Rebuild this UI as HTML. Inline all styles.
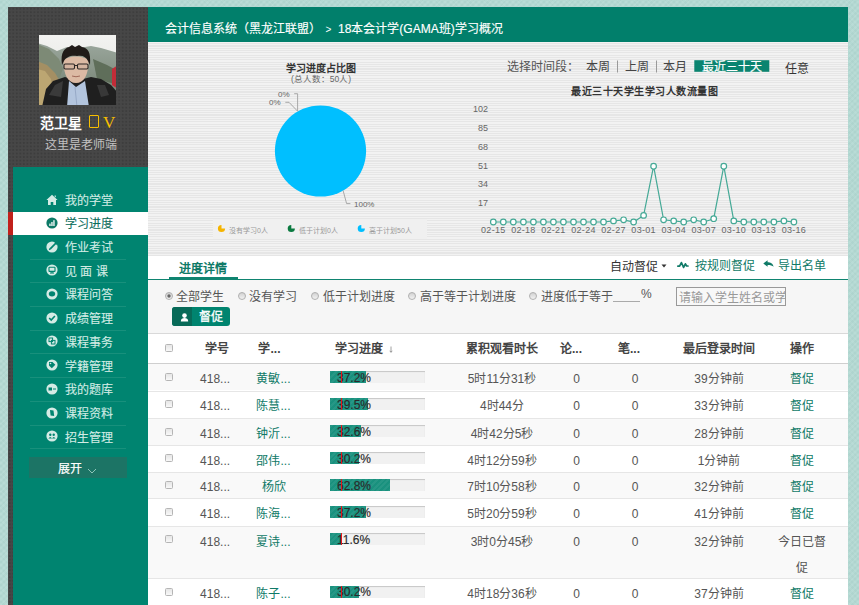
<!DOCTYPE html>
<html lang="zh-CN"><head><meta charset="utf-8">
<style>
*{margin:0;padding:0;box-sizing:border-box}
html,body{width:859px;height:605px;overflow:hidden}
body{position:relative;font-family:"Liberation Sans",sans-serif;font-size:12px;color:#333;
background-color:#b4d9d3;
background-image:repeating-linear-gradient(45deg,rgba(255,255,255,.07) 0 2px,rgba(0,0,0,0) 2px 4px),repeating-linear-gradient(-45deg,rgba(0,60,50,.03) 0 2px,rgba(0,0,0,0) 2px 4px);}
.a{position:absolute;white-space:nowrap}
#side{position:absolute;left:8px;top:7px;width:140px;height:600px;background-color:#474747;
background-image:radial-gradient(circle at 1.6px 1.6px,#3d3d3d 0.7px,rgba(0,0,0,0) 1.3px);background-size:3.54px 3.54px}
#menu{position:absolute;left:13px;top:167px;width:135px;height:440px;background:#008470}
#main{position:absolute;left:148px;top:7px;width:700px;height:600px;background:#fff;overflow:hidden}
#hdr{position:absolute;left:0;top:0;width:700px;height:35px;background:#017f6b}
#ov{position:absolute;left:0;top:0;width:859px;height:605px}
#charts{position:absolute;left:0;top:35px;width:700px;height:214px;background-color:#ececec;
background-image:repeating-linear-gradient(180deg,#f2f2f2 0 1.2px,#e6e6e6 1.2px 2.3px)}
</style></head><body>
<div id="side">
  <svg class="a" style="left:31px;top:28px" width="77" height="70" viewBox="0 0 77 70">
    <defs>
      <linearGradient id="sky" x1="0" y1="0" x2="0" y2="1"><stop offset="0" stop-color="#f3f3f1"/><stop offset="1" stop-color="#dfe2de"/></linearGradient>
      <linearGradient id="mt" x1="0" y1="0" x2="0" y2="1"><stop offset="0" stop-color="#9aa69c"/><stop offset="1" stop-color="#6d7b6a"/></linearGradient>
      <filter id="bl" x="0" y="0" width="1" height="1"><feGaussianBlur stdDeviation="0.7"/></filter>
      <clipPath id="avc"><rect width="77" height="70"/></clipPath>
    </defs>
    <g clip-path="url(#avc)"><g style="filter:blur(0.5px)">
    <rect x="-2" y="-2" width="81" height="74" fill="url(#sky)"/>
    <path d="M-2 8 L8 11 L18 16 L28 12 L40 13 L52 11 L62 13 L79 18 L79 72 L-2 72Z" fill="url(#mt)"/>
    <path d="M-2 9 L10 14 L20 24 L24 34 L20 44 L-2 44Z" fill="#7d8a76"/>
    <path d="M54 24 L68 30 L79 36 L79 50 L58 44Z" fill="#5f6e5a"/>
    <path d="M-2 26 L8 30 L16 38 L22 48 L20 72 L-2 72Z" fill="#a48f63"/>
    <path d="M-2 34 L6 36 L12 44 L14 56 L8 72 L-2 72Z" fill="#bca672"/>
    <path d="M73 34 L79 30 L79 54 L73 50Z" fill="#c22c38"/>
    <path d="M3 72 L7 54 L14 46 L26 42 L32 44 L44 44 L52 42 L62 44 L72 50 L79 58 L79 72Z" fill="#1f1f1f"/>
    <path d="M10 60 L16 50 L24 46 L22 62Z" fill="#3a3a3a"/>
    <path d="M58 50 L66 50 L70 60 L62 62Z" fill="#383838"/>
    <path d="M30 46 L37 52 L46 46 L50 72 L28 72Z" fill="#b3c5de"/>
    <path d="M36 52 L38 72" stroke="#8fa2c0" stroke-width="0.8"/>
    <path d="M24.5 26 C24.5 40 29 48 37 48 C45 48 49.5 40 49.5 26 C47 20 27 20 24.5 26Z" fill="#dcbaa4"/>
    <path d="M23 30 C21 17 26 13 30 12 L33 10 L36 12 L40 10 L43 12 C49 13 52 17 51 30 L49 26 C47 22 44 20 38 21 C32 20 27 22 25 26Z" fill="#201b18"/>
    <rect x="25" y="29" width="10.5" height="5" rx="1.2" fill="#d4b4a0" stroke="#2c2624" stroke-width="1.1"/>
    <rect x="38.5" y="29" width="10.5" height="5" rx="1.2" fill="#d4b4a0" stroke="#2c2624" stroke-width="1.1"/>
    <path d="M35.5 30.5 L38.5 30.5" stroke="#302a28" stroke-width="1"/>
    <path d="M33 41 Q37 42.5 41 41" stroke="#a06a5a" stroke-width="1" fill="none"/>
    </g></g>
  </svg>
  <div class="a" id="uname" style="left:32px;top:108px;font-size:14px;line-height:16px;font-weight:bold;color:#fff">范卫星</div>
  <div class="a" style="left:81px;top:108px;width:9.5px;height:13px;border:1.6px solid #f7be00;border-radius:1px"></div>
  <div class="a" style="left:95px;top:105.80px;font-family:'Liberation Serif',serif;font-size:17px;line-height:20px;color:#f7be00">V</div>
  <div class="a" style="left:37px;top:129.80px;font-size:12px;line-height:16px;color:#c2c2c2">这里是老师端</div>
</div>
<div id="menu">
<svg class="a" style="left:33.3px;top:27.10px" width="12" height="12" viewBox="0 0 12 12"><path d="M6 0.8 L11.6 6 L10 6 L10 11 L7.3 11 L7.3 8 L4.7 8 L4.7 11 L2 11 L2 6 L0.4 6Z M8.6 1.5 L9.8 1.5 L9.8 3.6 L8.6 2.6Z" fill="#d4ebe5"/></svg>
<div class="a" style="left:52px;top:25.60px;line-height:16px;font-size:12px;color:#d3ece5;-webkit-text-stroke:0.1px">我的学堂</div>
<div class="a" style="left:0;top:45.02px;width:135px;height:23px;background:#fff"></div>
<div class="a" style="left:-5px;top:45.02px;width:5px;height:23px;background:#c1201b"></div>
<svg class="a" style="left:33.3px;top:49.82px" width="12" height="12" viewBox="0 0 12 12"><circle cx="6" cy="6" r="5.6" fill="#0d7a67"/><rect x="3.3" y="6.6" width="1.3" height="2.4" fill="#fff"/><rect x="5.3" y="5" width="1.3" height="4" fill="#fff"/><rect x="7.3" y="3.2" width="1.3" height="5.8" fill="#fff"/></svg>
<div class="a" style="left:52px;top:49.32px;line-height:16px;font-size:12px;color:#0b6c5b;-webkit-text-stroke:0.1px">学习进度</div>
<svg class="a" style="left:33.3px;top:73.54px" width="12" height="12" viewBox="0 0 12 12"><circle cx="6" cy="6" r="5.6" fill="#d4ebe5"/><path d="M4.2 7.8 L11.5 0.5" stroke="#008470" stroke-width="1.7"/><path d="M2.8 9.2 L3.4 7.1 L4.9 8.6Z" fill="#008470"/><path d="M8.4 1.2 L11.6 0.4 L11.2 4.4Z" fill="#008470"/></svg>
<div class="a" style="left:52px;top:73.04px;line-height:16px;font-size:12px;color:#d3ece5;-webkit-text-stroke:0.1px">作业考试</div>
<div class="a" style="left:17px;top:91.60px;width:96px;height:1px;background:#18907c"></div>
<svg class="a" style="left:33.3px;top:97.26px" width="12" height="12" viewBox="0 0 12 12"><circle cx="6" cy="6" r="5.6" fill="#d4ebe5"/><rect x="3" y="3.2" width="6" height="4.2" rx=".5" fill="none" stroke="#008470" stroke-width="1.1"/><path d="M4 9 L8 9" stroke="#008470" stroke-width="1.1"/><path d="M6 7.4 L6 9" stroke="#008470" stroke-width="1"/></svg>
<div class="a" style="left:52px;top:96.76px;line-height:16px;font-size:12px;color:#d3ece5;-webkit-text-stroke:0.1px">见 面 课</div>
<div class="a" style="left:17px;top:115.32px;width:96px;height:1px;background:#18907c"></div>
<svg class="a" style="left:33.3px;top:120.98px" width="12" height="12" viewBox="0 0 12 12"><circle cx="6" cy="6" r="5.6" fill="#d4ebe5"/><ellipse cx="6" cy="5.8" rx="3.2" ry="2.6" fill="#008470"/></svg>
<div class="a" style="left:52px;top:120.48px;line-height:16px;font-size:12px;color:#d3ece5;-webkit-text-stroke:0.1px">课程问答</div>
<div class="a" style="left:17px;top:139.04px;width:96px;height:1px;background:#18907c"></div>
<svg class="a" style="left:33.3px;top:144.70px" width="12" height="12" viewBox="0 0 12 12"><circle cx="6" cy="6" r="5.6" fill="#d4ebe5"/><path d="M3.2 6 L5.2 8 L8.9 4" stroke="#008470" stroke-width="1.6" fill="none"/></svg>
<div class="a" style="left:52px;top:144.20px;line-height:16px;font-size:12px;color:#d3ece5;-webkit-text-stroke:0.1px">成绩管理</div>
<div class="a" style="left:17px;top:162.76px;width:96px;height:1px;background:#18907c"></div>
<svg class="a" style="left:33.3px;top:168.42px" width="12" height="12" viewBox="0 0 12 12"><circle cx="6" cy="6" r="5.6" fill="#d4ebe5"/><rect x="3" y="3" width="3.6" height="3.6" fill="none" stroke="#008470" stroke-width="1"/><rect x="5.4" y="5.4" width="3.6" height="3.6" fill="none" stroke="#008470" stroke-width="1"/></svg>
<div class="a" style="left:52px;top:167.92px;line-height:16px;font-size:12px;color:#d3ece5;-webkit-text-stroke:0.1px">课程事务</div>
<div class="a" style="left:17px;top:186.48px;width:96px;height:1px;background:#18907c"></div>
<svg class="a" style="left:33.3px;top:192.14px" width="12" height="12" viewBox="0 0 12 12"><circle cx="6" cy="6" r="5.6" fill="#d4ebe5"/><path d="M3 3 L6.5 3 L9.3 5.8 L5.8 9.3 L3 6.5Z" fill="#008470"/><circle cx="4.5" cy="4.5" r=".8" fill="#d4ebe5"/></svg>
<div class="a" style="left:52px;top:191.64px;line-height:16px;font-size:12px;color:#d3ece5;-webkit-text-stroke:0.1px">学籍管理</div>
<div class="a" style="left:17px;top:210.20px;width:96px;height:1px;background:#18907c"></div>
<svg class="a" style="left:33.3px;top:215.86px" width="12" height="12" viewBox="0 0 12 12"><circle cx="6" cy="6" r="5.6" fill="#d4ebe5"/><rect x="2.5" y="4.5" width="3.5" height="3" fill="#008470"/><path d="M7 6 L10 6" stroke="#008470" stroke-width="1"/></svg>
<div class="a" style="left:52px;top:215.36px;line-height:16px;font-size:12px;color:#d3ece5;-webkit-text-stroke:0.1px">我的题库</div>
<div class="a" style="left:17px;top:233.92px;width:96px;height:1px;background:#18907c"></div>
<svg class="a" style="left:33.3px;top:239.58px" width="12" height="12" viewBox="0 0 12 12"><circle cx="6" cy="6" r="5.6" fill="#d4ebe5"/><path d="M4 3 L7.5 3.5 L8.2 9 L4.6 8.5Z" fill="#008470"/></svg>
<div class="a" style="left:52px;top:239.08px;line-height:16px;font-size:12px;color:#d3ece5;-webkit-text-stroke:0.1px">课程资料</div>
<div class="a" style="left:17px;top:257.64px;width:96px;height:1px;background:#18907c"></div>
<svg class="a" style="left:33.3px;top:263.30px" width="12" height="12" viewBox="0 0 12 12"><circle cx="6" cy="6" r="5.6" fill="#d4ebe5"/><circle cx="4.3" cy="4.8" r="1.2" fill="#008470"/><circle cx="7.7" cy="4.8" r="1.2" fill="#008470"/><path d="M2.4 8.6 Q4.3 5.6 6 8.6 Q7.7 5.6 9.6 8.6Z" fill="#008470"/></svg>
<div class="a" style="left:52px;top:262.80px;line-height:16px;font-size:12px;color:#d3ece5;-webkit-text-stroke:0.1px">招生管理</div>
<div class="a" style="left:17px;top:281.36px;width:96px;height:1px;background:#18907c"></div>
<div class="a" style="left:16px;top:290px;width:98px;height:21px;background:#1c7465"></div>
<div class="a" style="left:45px;top:293.80px;line-height:16px;font-size:12px;color:#fff;-webkit-text-stroke:0.2px #fff">展开</div>
<svg class="a" style="left:74px;top:300.7px" width="10" height="6" viewBox="0 0 10 6"><path d="M1 1 L5 5 L9 1" stroke="#8fc4b8" stroke-width="1" fill="none"/></svg>
</div>
<div id="main">
  <div id="hdr">
  <div class="a" style="left:17px;top:13.80px;font-size:12px;line-height:16px;color:#fff;-webkit-text-stroke:0.15px #fff">会计信息系统（黑龙江联盟）</div>
  <div class="a" style="left:177.5px;top:15.80px;font-size:10px;line-height:14px;color:#fff">&gt;</div>
  <div class="a" style="left:190px;top:13.80px;font-size:12px;line-height:16px;color:#fff;-webkit-text-stroke:0.15px #fff">18本会计学(GAMA班)学习概况</div>
</div>
  <div id="charts"></div>
</div>
<div id="ov">
<svg class="a" style="left:0;top:0" width="859" height="605" viewBox="0 0 859 605">
  <rect x="213" y="219" width="214" height="20" fill="#f0f0f0"/>
  <circle cx="320.5" cy="151" r="45.6" fill="#00bfff"/>
  <path d="M294.2 93.7 L297.6 93.7 L297.6 111.2 M285.3 102.3 L289 102.3 L297.6 111.2 M343.1 190.5 L346.6 203.6 L350.4 203.6" stroke="#a0a0a0" stroke-width="0.9" fill="none"/>
  <path d="M221.5 224.9 A3.6 3.6 0 1 0 225.1 228.5 L221.5 228.5Z" fill="#f5b400"/>
  <path d="M291.3 224.9 A3.6 3.6 0 1 0 294.9 228.5 L291.3 228.5Z" fill="#0b7a40"/>
  <path d="M361.3 224.9 A3.6 3.6 0 1 0 364.9 228.5 L361.3 228.5Z" fill="#00bfff"/>
  <polyline points="493.3,222.0 503.3,222.0 513.3,222.0 523.4,222.0 533.4,222.0 543.4,222.0 553.4,222.0 563.4,222.0 573.5,222.0 583.5,222.0 593.5,222.0 603.5,222.0 613.5,220.9 623.6,219.8 633.6,222.0 643.6,215.4 653.6,166.2 663.6,219.8 673.7,220.9 683.7,222.0 693.7,219.8 703.7,222.0 713.7,218.7 723.8,166.2 733.8,220.9 743.8,222.0 753.8,222.0 763.8,222.0 773.9,222.0 783.9,220.9 793.9,222.0" fill="none" stroke="#45a996" stroke-width="1.2"/>
  <circle cx="493.3" cy="222.0" r="2.8" fill="#fff" stroke="#45a996" stroke-width="1.2"/><circle cx="503.3" cy="222.0" r="2.8" fill="#fff" stroke="#45a996" stroke-width="1.2"/><circle cx="513.3" cy="222.0" r="2.8" fill="#fff" stroke="#45a996" stroke-width="1.2"/><circle cx="523.4" cy="222.0" r="2.8" fill="#fff" stroke="#45a996" stroke-width="1.2"/><circle cx="533.4" cy="222.0" r="2.8" fill="#fff" stroke="#45a996" stroke-width="1.2"/><circle cx="543.4" cy="222.0" r="2.8" fill="#fff" stroke="#45a996" stroke-width="1.2"/><circle cx="553.4" cy="222.0" r="2.8" fill="#fff" stroke="#45a996" stroke-width="1.2"/><circle cx="563.4" cy="222.0" r="2.8" fill="#fff" stroke="#45a996" stroke-width="1.2"/><circle cx="573.5" cy="222.0" r="2.8" fill="#fff" stroke="#45a996" stroke-width="1.2"/><circle cx="583.5" cy="222.0" r="2.8" fill="#fff" stroke="#45a996" stroke-width="1.2"/><circle cx="593.5" cy="222.0" r="2.8" fill="#fff" stroke="#45a996" stroke-width="1.2"/><circle cx="603.5" cy="222.0" r="2.8" fill="#fff" stroke="#45a996" stroke-width="1.2"/><circle cx="613.5" cy="220.9" r="2.8" fill="#fff" stroke="#45a996" stroke-width="1.2"/><circle cx="623.6" cy="219.8" r="2.8" fill="#fff" stroke="#45a996" stroke-width="1.2"/><circle cx="633.6" cy="222.0" r="2.8" fill="#fff" stroke="#45a996" stroke-width="1.2"/><circle cx="643.6" cy="215.4" r="2.8" fill="#fff" stroke="#45a996" stroke-width="1.2"/><circle cx="653.6" cy="166.2" r="2.8" fill="#fff" stroke="#45a996" stroke-width="1.2"/><circle cx="663.6" cy="219.8" r="2.8" fill="#fff" stroke="#45a996" stroke-width="1.2"/><circle cx="673.7" cy="220.9" r="2.8" fill="#fff" stroke="#45a996" stroke-width="1.2"/><circle cx="683.7" cy="222.0" r="2.8" fill="#fff" stroke="#45a996" stroke-width="1.2"/><circle cx="693.7" cy="219.8" r="2.8" fill="#fff" stroke="#45a996" stroke-width="1.2"/><circle cx="703.7" cy="222.0" r="2.8" fill="#fff" stroke="#45a996" stroke-width="1.2"/><circle cx="713.7" cy="218.7" r="2.8" fill="#fff" stroke="#45a996" stroke-width="1.2"/><circle cx="723.8" cy="166.2" r="2.8" fill="#fff" stroke="#45a996" stroke-width="1.2"/><circle cx="733.8" cy="220.9" r="2.8" fill="#fff" stroke="#45a996" stroke-width="1.2"/><circle cx="743.8" cy="222.0" r="2.8" fill="#fff" stroke="#45a996" stroke-width="1.2"/><circle cx="753.8" cy="222.0" r="2.8" fill="#fff" stroke="#45a996" stroke-width="1.2"/><circle cx="763.8" cy="222.0" r="2.8" fill="#fff" stroke="#45a996" stroke-width="1.2"/><circle cx="773.9" cy="222.0" r="2.8" fill="#fff" stroke="#45a996" stroke-width="1.2"/><circle cx="783.9" cy="220.9" r="2.8" fill="#fff" stroke="#45a996" stroke-width="1.2"/><circle cx="793.9" cy="222.0" r="2.8" fill="#fff" stroke="#45a996" stroke-width="1.2"/>
  <rect x="694.3" y="60.2" width="75" height="11.6" fill="#0b8470"/>
  <rect x="617" y="60.5" width="1" height="12" fill="#999"/>
  <rect x="656" y="60.5" width="1" height="12" fill="#999"/>
</svg>
<div class="a" style="left:286px;top:61.80px;font-size:10px;line-height:14px;color:#333;font-weight:bold">学习进度占比图</div>
<div class="a" style="left:291px;top:72.80px;font-size:8.5px;line-height:12px;color:#666;">(总人数：50人)</div>
<div class="a" style="left:278px;top:88.80px;font-size:8px;line-height:12px;color:#666;">0%</div>
<div class="a" style="left:269px;top:96.80px;font-size:8px;line-height:12px;color:#666;">0%</div>
<div class="a" style="left:354px;top:198.80px;font-size:8px;line-height:12px;color:#666;">100%</div>
<div class="a" style="left:229px;top:224.80px;font-size:7px;line-height:11px;color:#999;">没有学习0人</div>
<div class="a" style="left:299px;top:224.80px;font-size:7px;line-height:11px;color:#999;">低于计划0人</div>
<div class="a" style="left:369px;top:224.80px;font-size:7px;line-height:11px;color:#999;">高于计划50人</div>
<div class="a" style="left:507px;top:58.80px;font-size:12px;line-height:16px;color:#555;">选择时间段：</div>
<div class="a" style="left:586px;top:58.80px;font-size:12px;line-height:16px;color:#444;">本周</div>
<div class="a" style="left:625px;top:58.80px;font-size:12px;line-height:16px;color:#444;">上周</div>
<div class="a" style="left:663px;top:58.80px;font-size:12px;line-height:16px;color:#444;">本月</div>
<div class="a" style="left:702px;top:58.80px;font-size:12px;line-height:16px;color:#fff;-webkit-text-stroke:0.2px #fff">最近三十天</div>
<div class="a" style="left:785px;top:60.80px;font-size:12px;line-height:16px;color:#333;">任意</div>
<div class="a" style="left:571px;top:84.80px;font-size:10px;line-height:14px;letter-spacing:0.5px;color:#333;font-weight:bold">最近三十天学生学习人数流量图</div>
<div class="a" style="left:440px;width:48px;text-align:right;top:103.20px;font-size:9px;line-height:13px;color:#666">102</div>
<div class="a" style="left:440px;width:48px;text-align:right;top:122.10px;font-size:9px;line-height:13px;color:#666">85</div>
<div class="a" style="left:440px;width:48px;text-align:right;top:140.80px;font-size:9px;line-height:13px;color:#666">68</div>
<div class="a" style="left:440px;width:48px;text-align:right;top:160.20px;font-size:9px;line-height:13px;color:#666">51</div>
<div class="a" style="left:440px;width:48px;text-align:right;top:178.40px;font-size:9px;line-height:13px;color:#666">34</div>
<div class="a" style="left:440px;width:48px;text-align:right;top:197.10px;font-size:9px;line-height:13px;color:#666">17</div>
<div class="a" style="left:473.3px;width:40px;text-align:center;top:223.50px;font-size:9px;line-height:13px;color:#666;letter-spacing:0.3px">02-15</div>
<div class="a" style="left:503.4px;width:40px;text-align:center;top:223.50px;font-size:9px;line-height:13px;color:#666;letter-spacing:0.3px">02-18</div>
<div class="a" style="left:533.4px;width:40px;text-align:center;top:223.50px;font-size:9px;line-height:13px;color:#666;letter-spacing:0.3px">02-21</div>
<div class="a" style="left:563.5px;width:40px;text-align:center;top:223.50px;font-size:9px;line-height:13px;color:#666;letter-spacing:0.3px">02-24</div>
<div class="a" style="left:593.5px;width:40px;text-align:center;top:223.50px;font-size:9px;line-height:13px;color:#666;letter-spacing:0.3px">02-27</div>
<div class="a" style="left:623.6px;width:40px;text-align:center;top:223.50px;font-size:9px;line-height:13px;color:#666;letter-spacing:0.3px">03-01</div>
<div class="a" style="left:653.7px;width:40px;text-align:center;top:223.50px;font-size:9px;line-height:13px;color:#666;letter-spacing:0.3px">03-04</div>
<div class="a" style="left:683.7px;width:40px;text-align:center;top:223.50px;font-size:9px;line-height:13px;color:#666;letter-spacing:0.3px">03-07</div>
<div class="a" style="left:713.8px;width:40px;text-align:center;top:223.50px;font-size:9px;line-height:13px;color:#666;letter-spacing:0.3px">03-10</div>
<div class="a" style="left:743.8px;width:40px;text-align:center;top:223.50px;font-size:9px;line-height:13px;color:#666;letter-spacing:0.3px">03-13</div>
<div class="a" style="left:773.9px;width:40px;text-align:center;top:223.50px;font-size:9px;line-height:13px;color:#666;letter-spacing:0.3px">03-16</div>
<div class="a" style="left:148px;top:279px;width:700px;height:1px;background:#0f8470"></div>
<div class="a" style="left:169px;top:277px;width:69px;height:2px;background:#0f8470"></div>
<div class="a" style="left:179px;top:260.80px;font-size:12px;line-height:16px;color:#0f7a67;font-weight:bold">进度详情</div>
<div class="a" style="left:610px;top:258.80px;font-size:12px;line-height:16px;color:#333;">自动督促</div>
<svg class="a" style="left:661px;top:264px" width="6" height="4" viewBox="0 0 6 4"><path d="M0.5 0.5 L5.5 0.5 L3 3.5Z" fill="#333"/></svg>
<svg class="a" style="left:677px;top:261px" width="12" height="8" viewBox="0 0 12 8"><path d="M0.8 5.2 L2.6 5.2 L4.4 1.6 L6.6 6.4 L8.4 2.8 L9.6 5 L11 5" stroke="#0f7a67" stroke-width="1.7" fill="none" stroke-linejoin="round" stroke-linecap="round"/></svg>
<div class="a" style="left:695px;top:257.80px;font-size:12px;line-height:16px;color:#0f7a67;">按规则督促</div>
<svg class="a" style="left:762.5px;top:260px" width="11" height="8" viewBox="0 0 11 8"><path d="M0.3 3.5 L4.6 0.3 L4.6 2.2 C7.5 2.2 9.8 3 10.6 6.8 C9.2 5.4 7.5 4.9 4.6 4.9 L4.6 6.8Z" fill="#0f7a67"/></svg>
<div class="a" style="left:778px;top:257.80px;font-size:12px;line-height:16px;color:#0f7a67;">导出名单</div>
<div class="a" style="left:148px;top:280px;width:700px;height:54px;background:#f6f6f6;border-bottom:1px solid #d9d9d9"></div>
<svg class="a" style="left:165.0px;top:292px" width="8" height="8" viewBox="0 0 8 8"><defs><linearGradient id="rg" x1="0" y1="0" x2="0" y2="1"><stop offset="0" stop-color="#d0d0d0"/><stop offset="1" stop-color="#f4f4f4"/></linearGradient></defs><circle cx="4" cy="4" r="3.5" fill="url(#rg)" stroke="#aaa" stroke-width="0.9"/><circle cx="4" cy="4" r="1.7" fill="#666"/></svg>
<div class="a" style="left:176px;top:288.80px;font-size:12px;line-height:16px;color:#555;">全部学生</div>
<svg class="a" style="left:237.5px;top:292px" width="8" height="8" viewBox="0 0 8 8"><defs><linearGradient id="rg" x1="0" y1="0" x2="0" y2="1"><stop offset="0" stop-color="#d0d0d0"/><stop offset="1" stop-color="#f4f4f4"/></linearGradient></defs><circle cx="4" cy="4" r="3.5" fill="url(#rg)" stroke="#aaa" stroke-width="0.9"/></svg>
<div class="a" style="left:249px;top:288.80px;font-size:12px;line-height:16px;color:#555;">没有学习</div>
<svg class="a" style="left:311.0px;top:292px" width="8" height="8" viewBox="0 0 8 8"><defs><linearGradient id="rg" x1="0" y1="0" x2="0" y2="1"><stop offset="0" stop-color="#d0d0d0"/><stop offset="1" stop-color="#f4f4f4"/></linearGradient></defs><circle cx="4" cy="4" r="3.5" fill="url(#rg)" stroke="#aaa" stroke-width="0.9"/></svg>
<div class="a" style="left:322.5px;top:288.80px;font-size:12px;line-height:16px;color:#555;">低于计划进度</div>
<svg class="a" style="left:408.0px;top:292px" width="8" height="8" viewBox="0 0 8 8"><defs><linearGradient id="rg" x1="0" y1="0" x2="0" y2="1"><stop offset="0" stop-color="#d0d0d0"/><stop offset="1" stop-color="#f4f4f4"/></linearGradient></defs><circle cx="4" cy="4" r="3.5" fill="url(#rg)" stroke="#aaa" stroke-width="0.9"/></svg>
<div class="a" style="left:419.5px;top:288.80px;font-size:12px;line-height:16px;color:#555;">高于等于计划进度</div>
<svg class="a" style="left:529.0px;top:292px" width="8" height="8" viewBox="0 0 8 8"><defs><linearGradient id="rg" x1="0" y1="0" x2="0" y2="1"><stop offset="0" stop-color="#d0d0d0"/><stop offset="1" stop-color="#f4f4f4"/></linearGradient></defs><circle cx="4" cy="4" r="3.5" fill="url(#rg)" stroke="#aaa" stroke-width="0.9"/></svg>
<div class="a" style="left:540.5px;top:288.80px;font-size:12px;line-height:16px;color:#555;">进度低于等于</div>
<div class="a" style="left:613px;top:301px;width:27px;height:1px;background:#aaa"></div>
<div class="a" style="left:641px;top:285.80px;font-size:12px;line-height:16px;color:#555;">%</div>
<div class="a" style="left:675.5px;top:287px;width:110px;height:19px;border:1px solid #999;background:#f8f8f8;overflow:hidden"><div style="position:absolute;left:2px;top:1.5px;font-size:12px;line-height:16px;color:#999;white-space:nowrap">请输入学生姓名或学号</div></div>
<div class="a" style="left:172px;top:307px;width:58px;height:19px;border-radius:3px;background:#00846f;overflow:hidden"><div style="position:absolute;left:0;top:0;width:20px;height:19px;background:#086a58"></div></div>
<svg class="a" style="left:179.5px;top:312.5px" width="9" height="9" viewBox="0 0 9 9"><circle cx="4.5" cy="2.6" r="2.3" fill="#fff"/><path d="M0.8 8.6 C0.8 5.8 2.4 5 4.5 5 C6.6 5 8.2 5.8 8.2 8.6Z" fill="#fff"/></svg>
<div class="a" style="left:199px;top:309.30px;font-size:12px;line-height:16px;color:#fff;-webkit-text-stroke:0.3px #fff">督促</div>
<div class="a" style="left:148px;top:363px;width:700px;height:1px;background:#cfcfcf"></div>
<div class="a" style="left:165.0px;top:344.0px;width:8px;height:8px;border:1px solid #b5b5b5;border-radius:1.5px;background:linear-gradient(#e6e6e6,#f8f8f8)"></div>
<div class="a" style="left:157.0px;width:120px;text-align:center;top:340.80px;font-size:12px;line-height:16px;color:#444;font-weight:bold">学号</div>
<div class="a" style="left:209.5px;width:120px;text-align:center;top:340.80px;font-size:12px;line-height:16px;color:#444;font-weight:bold">学...</div>
<div class="a" style="left:299.0px;width:120px;text-align:center;top:340.80px;font-size:12px;line-height:16px;color:#444;font-weight:bold">学习进度</div>
<svg class="a" style="left:388.5px;top:346px" width="4" height="7" viewBox="0 0 4 7"><path d="M2 0.5 L2 6 M0.8 4.8 L2 6.4 L3.2 4.8" stroke="#888" stroke-width="0.8" fill="none"/></svg>
<div class="a" style="left:442.0px;width:120px;text-align:center;top:340.80px;font-size:12px;line-height:16px;color:#444;font-weight:bold">累积观看时长</div>
<div class="a" style="left:511.0px;width:120px;text-align:center;top:340.80px;font-size:12px;line-height:16px;color:#444;font-weight:bold">论...</div>
<div class="a" style="left:569.0px;width:120px;text-align:center;top:340.80px;font-size:12px;line-height:16px;color:#444;font-weight:bold">笔...</div>
<div class="a" style="left:658.8px;width:120px;text-align:center;top:340.80px;font-size:12px;line-height:16px;color:#444;font-weight:bold">最后登录时间</div>
<div class="a" style="left:741.5px;width:120px;text-align:center;top:340.80px;font-size:12px;line-height:16px;color:#444;font-weight:bold">操作</div>
<div class="a" style="left:148px;top:364.3px;width:700px;height:26.2px;background:#f9f9f9"></div>
<div class="a" style="left:165.0px;top:373.0px;width:8px;height:8px;border:1px solid #b5b5b5;border-radius:1.5px;background:linear-gradient(#e6e6e6,#f8f8f8)"></div>
<div class="a" style="left:155.1px;width:120px;text-align:center;top:366.10px;font-size:12px;line-height:26px;color:#555;">418...</div>
<div class="a" style="left:213.5px;width:120px;text-align:center;top:366.10px;font-size:12px;line-height:26px;color:#0f7a67;">黄敏...</div>
<div class="a" style="left:330px;top:370.8px;width:95px;height:12px;background:#f1f1f1;box-shadow:inset 0 1px 1px rgba(0,0,0,.18)"></div>
<div class="a" style="left:330px;top:370.8px;width:35.5px;height:12px;background-color:#19917e;background-image:repeating-linear-gradient(-45deg,rgba(255,255,255,.06) 0 2px,rgba(0,0,0,0) 2px 4px)"></div>
<div class="a" style="left:337px;top:369.60px;font-size:12px;line-height:16px;color:#2a2a2a;-webkit-text-stroke:0.15px #2a2a2a">37.2%</div>
<div class="a" style="left:341px;top:370.8px;width:1px;height:12px;background:#e8141b"></div>
<div class="a" style="left:442.0px;width:120px;text-align:center;top:366.10px;font-size:12px;line-height:26px;color:#555;">5时11分31秒</div>
<div class="a" style="left:516.6px;width:120px;text-align:center;top:366.10px;font-size:12px;line-height:26px;color:#555;">0</div>
<div class="a" style="left:575.0px;width:120px;text-align:center;top:366.10px;font-size:12px;line-height:26px;color:#555;">0</div>
<div class="a" style="left:659.0px;width:120px;text-align:center;top:366.10px;font-size:12px;line-height:26px;color:#555;">39分钟前</div>
<div class="a" style="left:742.0px;width:120px;text-align:center;top:366.10px;font-size:12px;line-height:26px;color:#0f7a67;">督促</div>
<div class="a" style="left:148px;top:390.5px;width:700px;height:1px;background:#e6e6e6"></div>
<div class="a" style="left:165.0px;top:400.2px;width:8px;height:8px;border:1px solid #b5b5b5;border-radius:1.5px;background:linear-gradient(#e6e6e6,#f8f8f8)"></div>
<div class="a" style="left:155.1px;width:120px;text-align:center;top:393.30px;font-size:12px;line-height:26px;color:#555;">418...</div>
<div class="a" style="left:213.5px;width:120px;text-align:center;top:393.30px;font-size:12px;line-height:26px;color:#0f7a67;">陈慧...</div>
<div class="a" style="left:330px;top:398.0px;width:95px;height:12px;background:#f1f1f1;box-shadow:inset 0 1px 1px rgba(0,0,0,.18)"></div>
<div class="a" style="left:330px;top:398.0px;width:37.6px;height:12px;background-color:#19917e;background-image:repeating-linear-gradient(-45deg,rgba(255,255,255,.06) 0 2px,rgba(0,0,0,0) 2px 4px)"></div>
<div class="a" style="left:337px;top:396.80px;font-size:12px;line-height:16px;color:#2a2a2a;-webkit-text-stroke:0.15px #2a2a2a">39.5%</div>
<div class="a" style="left:341px;top:398.0px;width:1px;height:12px;background:#e8141b"></div>
<div class="a" style="left:442.0px;width:120px;text-align:center;top:393.30px;font-size:12px;line-height:26px;color:#555;">4时44分</div>
<div class="a" style="left:516.6px;width:120px;text-align:center;top:393.30px;font-size:12px;line-height:26px;color:#555;">0</div>
<div class="a" style="left:575.0px;width:120px;text-align:center;top:393.30px;font-size:12px;line-height:26px;color:#555;">0</div>
<div class="a" style="left:659.0px;width:120px;text-align:center;top:393.30px;font-size:12px;line-height:26px;color:#555;">33分钟前</div>
<div class="a" style="left:742.0px;width:120px;text-align:center;top:393.30px;font-size:12px;line-height:26px;color:#0f7a67;">督促</div>
<div class="a" style="left:148px;top:418.8px;width:700px;height:25.9px;background:#f9f9f9"></div>
<div class="a" style="left:148px;top:417.8px;width:700px;height:1px;background:#e6e6e6"></div>
<div class="a" style="left:165.0px;top:427.5px;width:8px;height:8px;border:1px solid #b5b5b5;border-radius:1.5px;background:linear-gradient(#e6e6e6,#f8f8f8)"></div>
<div class="a" style="left:155.1px;width:120px;text-align:center;top:420.60px;font-size:12px;line-height:26px;color:#555;">418...</div>
<div class="a" style="left:213.5px;width:120px;text-align:center;top:420.60px;font-size:12px;line-height:26px;color:#0f7a67;">钟沂...</div>
<div class="a" style="left:330px;top:425.3px;width:95px;height:12px;background:#f1f1f1;box-shadow:inset 0 1px 1px rgba(0,0,0,.18)"></div>
<div class="a" style="left:330px;top:425.3px;width:31.1px;height:12px;background-color:#19917e;background-image:repeating-linear-gradient(-45deg,rgba(255,255,255,.06) 0 2px,rgba(0,0,0,0) 2px 4px)"></div>
<div class="a" style="left:337px;top:424.10px;font-size:12px;line-height:16px;color:#2a2a2a;-webkit-text-stroke:0.15px #2a2a2a">32.6%</div>
<div class="a" style="left:341px;top:425.3px;width:1px;height:12px;background:#e8141b"></div>
<div class="a" style="left:442.0px;width:120px;text-align:center;top:420.60px;font-size:12px;line-height:26px;color:#555;">4时42分5秒</div>
<div class="a" style="left:516.6px;width:120px;text-align:center;top:420.60px;font-size:12px;line-height:26px;color:#555;">0</div>
<div class="a" style="left:575.0px;width:120px;text-align:center;top:420.60px;font-size:12px;line-height:26px;color:#555;">0</div>
<div class="a" style="left:659.0px;width:120px;text-align:center;top:420.60px;font-size:12px;line-height:26px;color:#555;">28分钟前</div>
<div class="a" style="left:742.0px;width:120px;text-align:center;top:420.60px;font-size:12px;line-height:26px;color:#0f7a67;">督促</div>
<div class="a" style="left:148px;top:444.7px;width:700px;height:1px;background:#e6e6e6"></div>
<div class="a" style="left:165.0px;top:454.4px;width:8px;height:8px;border:1px solid #b5b5b5;border-radius:1.5px;background:linear-gradient(#e6e6e6,#f8f8f8)"></div>
<div class="a" style="left:155.1px;width:120px;text-align:center;top:447.50px;font-size:12px;line-height:26px;color:#555;">418...</div>
<div class="a" style="left:213.5px;width:120px;text-align:center;top:447.50px;font-size:12px;line-height:26px;color:#0f7a67;">邵伟...</div>
<div class="a" style="left:330px;top:452.2px;width:95px;height:12px;background:#f1f1f1;box-shadow:inset 0 1px 1px rgba(0,0,0,.18)"></div>
<div class="a" style="left:330px;top:452.2px;width:28.8px;height:12px;background-color:#19917e;background-image:repeating-linear-gradient(-45deg,rgba(255,255,255,.06) 0 2px,rgba(0,0,0,0) 2px 4px)"></div>
<div class="a" style="left:337px;top:451.00px;font-size:12px;line-height:16px;color:#2a2a2a;-webkit-text-stroke:0.15px #2a2a2a">30.2%</div>
<div class="a" style="left:341px;top:452.2px;width:1px;height:12px;background:#e8141b"></div>
<div class="a" style="left:442.0px;width:120px;text-align:center;top:447.50px;font-size:12px;line-height:26px;color:#555;">4时12分59秒</div>
<div class="a" style="left:516.6px;width:120px;text-align:center;top:447.50px;font-size:12px;line-height:26px;color:#555;">0</div>
<div class="a" style="left:575.0px;width:120px;text-align:center;top:447.50px;font-size:12px;line-height:26px;color:#555;">0</div>
<div class="a" style="left:659.0px;width:120px;text-align:center;top:447.50px;font-size:12px;line-height:26px;color:#555;">1分钟前</div>
<div class="a" style="left:742.0px;width:120px;text-align:center;top:447.50px;font-size:12px;line-height:26px;color:#0f7a67;">督促</div>
<div class="a" style="left:148px;top:472.5px;width:700px;height:25.9px;background:#f9f9f9"></div>
<div class="a" style="left:148px;top:471.5px;width:700px;height:1px;background:#e6e6e6"></div>
<div class="a" style="left:165.0px;top:481.2px;width:8px;height:8px;border:1px solid #b5b5b5;border-radius:1.5px;background:linear-gradient(#e6e6e6,#f8f8f8)"></div>
<div class="a" style="left:155.1px;width:120px;text-align:center;top:474.30px;font-size:12px;line-height:26px;color:#555;">418...</div>
<div class="a" style="left:213.5px;width:120px;text-align:center;top:474.30px;font-size:12px;line-height:26px;color:#0f7a67;">杨欣</div>
<div class="a" style="left:330px;top:479.0px;width:95px;height:12px;background:#f1f1f1;box-shadow:inset 0 1px 1px rgba(0,0,0,.18)"></div>
<div class="a" style="left:330px;top:479.0px;width:59.8px;height:12px;background-color:#19917e;background-image:repeating-linear-gradient(-45deg,rgba(255,255,255,.06) 0 2px,rgba(0,0,0,0) 2px 4px)"></div>
<div class="a" style="left:337px;top:477.80px;font-size:12px;line-height:16px;color:#2a2a2a;-webkit-text-stroke:0.15px #2a2a2a">62.8%</div>
<div class="a" style="left:341px;top:479.0px;width:1px;height:12px;background:#e8141b"></div>
<div class="a" style="left:442.0px;width:120px;text-align:center;top:474.30px;font-size:12px;line-height:26px;color:#555;">7时10分58秒</div>
<div class="a" style="left:516.6px;width:120px;text-align:center;top:474.30px;font-size:12px;line-height:26px;color:#555;">0</div>
<div class="a" style="left:575.0px;width:120px;text-align:center;top:474.30px;font-size:12px;line-height:26px;color:#555;">0</div>
<div class="a" style="left:659.0px;width:120px;text-align:center;top:474.30px;font-size:12px;line-height:26px;color:#555;">32分钟前</div>
<div class="a" style="left:742.0px;width:120px;text-align:center;top:474.30px;font-size:12px;line-height:26px;color:#0f7a67;">督促</div>
<div class="a" style="left:148px;top:498.4px;width:700px;height:1px;background:#e6e6e6"></div>
<div class="a" style="left:165.0px;top:508.1px;width:8px;height:8px;border:1px solid #b5b5b5;border-radius:1.5px;background:linear-gradient(#e6e6e6,#f8f8f8)"></div>
<div class="a" style="left:155.1px;width:120px;text-align:center;top:501.20px;font-size:12px;line-height:26px;color:#555;">418...</div>
<div class="a" style="left:213.5px;width:120px;text-align:center;top:501.20px;font-size:12px;line-height:26px;color:#0f7a67;">陈海...</div>
<div class="a" style="left:330px;top:505.9px;width:95px;height:12px;background:#f1f1f1;box-shadow:inset 0 1px 1px rgba(0,0,0,.18)"></div>
<div class="a" style="left:330px;top:505.9px;width:35.5px;height:12px;background-color:#19917e;background-image:repeating-linear-gradient(-45deg,rgba(255,255,255,.06) 0 2px,rgba(0,0,0,0) 2px 4px)"></div>
<div class="a" style="left:337px;top:504.70px;font-size:12px;line-height:16px;color:#2a2a2a;-webkit-text-stroke:0.15px #2a2a2a">37.2%</div>
<div class="a" style="left:341px;top:505.9px;width:1px;height:12px;background:#e8141b"></div>
<div class="a" style="left:442.0px;width:120px;text-align:center;top:501.20px;font-size:12px;line-height:26px;color:#555;">5时20分59秒</div>
<div class="a" style="left:516.6px;width:120px;text-align:center;top:501.20px;font-size:12px;line-height:26px;color:#555;">0</div>
<div class="a" style="left:575.0px;width:120px;text-align:center;top:501.20px;font-size:12px;line-height:26px;color:#555;">0</div>
<div class="a" style="left:659.0px;width:120px;text-align:center;top:501.20px;font-size:12px;line-height:26px;color:#555;">41分钟前</div>
<div class="a" style="left:742.0px;width:120px;text-align:center;top:501.20px;font-size:12px;line-height:26px;color:#0f7a67;">督促</div>
<div class="a" style="left:148px;top:526.7px;width:700px;height:51.4px;background:#f9f9f9"></div>
<div class="a" style="left:148px;top:525.7px;width:700px;height:1px;background:#e6e6e6"></div>
<div class="a" style="left:165.0px;top:535.4px;width:8px;height:8px;border:1px solid #b5b5b5;border-radius:1.5px;background:linear-gradient(#e6e6e6,#f8f8f8)"></div>
<div class="a" style="left:155.1px;width:120px;text-align:center;top:528.50px;font-size:12px;line-height:26px;color:#555;">418...</div>
<div class="a" style="left:213.5px;width:120px;text-align:center;top:528.50px;font-size:12px;line-height:26px;color:#0f7a67;">夏诗...</div>
<div class="a" style="left:330px;top:533.2px;width:95px;height:12px;background:#f1f1f1;box-shadow:inset 0 1px 1px rgba(0,0,0,.18)"></div>
<div class="a" style="left:330px;top:533.2px;width:11.1px;height:12px;background-color:#19917e;background-image:repeating-linear-gradient(-45deg,rgba(255,255,255,.06) 0 2px,rgba(0,0,0,0) 2px 4px)"></div>
<div class="a" style="left:337px;top:532.00px;font-size:12px;line-height:16px;color:#2a2a2a;-webkit-text-stroke:0.15px #2a2a2a">11.6%</div>
<div class="a" style="left:341px;top:533.2px;width:1px;height:12px;background:#e8141b"></div>
<div class="a" style="left:442.0px;width:120px;text-align:center;top:528.50px;font-size:12px;line-height:26px;color:#555;">3时0分45秒</div>
<div class="a" style="left:516.6px;width:120px;text-align:center;top:528.50px;font-size:12px;line-height:26px;color:#555;">0</div>
<div class="a" style="left:575.0px;width:120px;text-align:center;top:528.50px;font-size:12px;line-height:26px;color:#555;">0</div>
<div class="a" style="left:659.0px;width:120px;text-align:center;top:528.50px;font-size:12px;line-height:26px;color:#555;">32分钟前</div>
<div class="a" style="left:772.0px;width:60px;text-align:center;top:528.50px;font-size:12px;line-height:26px;color:#555;">今日已督<br>促</div>
<div class="a" style="left:148px;top:578.1px;width:700px;height:1px;background:#e6e6e6"></div>
<div class="a" style="left:165.0px;top:587.8px;width:8px;height:8px;border:1px solid #b5b5b5;border-radius:1.5px;background:linear-gradient(#e6e6e6,#f8f8f8)"></div>
<div class="a" style="left:155.1px;width:120px;text-align:center;top:580.90px;font-size:12px;line-height:26px;color:#555;">418...</div>
<div class="a" style="left:213.5px;width:120px;text-align:center;top:580.90px;font-size:12px;line-height:26px;color:#0f7a67;">陈子...</div>
<div class="a" style="left:330px;top:585.6px;width:95px;height:12px;background:#f1f1f1;box-shadow:inset 0 1px 1px rgba(0,0,0,.18)"></div>
<div class="a" style="left:330px;top:585.6px;width:28.8px;height:12px;background-color:#19917e;background-image:repeating-linear-gradient(-45deg,rgba(255,255,255,.06) 0 2px,rgba(0,0,0,0) 2px 4px)"></div>
<div class="a" style="left:337px;top:584.40px;font-size:12px;line-height:16px;color:#2a2a2a;-webkit-text-stroke:0.15px #2a2a2a">30.2%</div>
<div class="a" style="left:341px;top:585.6px;width:1px;height:12px;background:#e8141b"></div>
<div class="a" style="left:442.0px;width:120px;text-align:center;top:580.90px;font-size:12px;line-height:26px;color:#555;">4时18分36秒</div>
<div class="a" style="left:516.6px;width:120px;text-align:center;top:580.90px;font-size:12px;line-height:26px;color:#555;">0</div>
<div class="a" style="left:575.0px;width:120px;text-align:center;top:580.90px;font-size:12px;line-height:26px;color:#555;">0</div>
<div class="a" style="left:659.0px;width:120px;text-align:center;top:580.90px;font-size:12px;line-height:26px;color:#555;">37分钟前</div>
<div class="a" style="left:742.0px;width:120px;text-align:center;top:580.90px;font-size:12px;line-height:26px;color:#0f7a67;">督促</div>
</div>
</body></html>
